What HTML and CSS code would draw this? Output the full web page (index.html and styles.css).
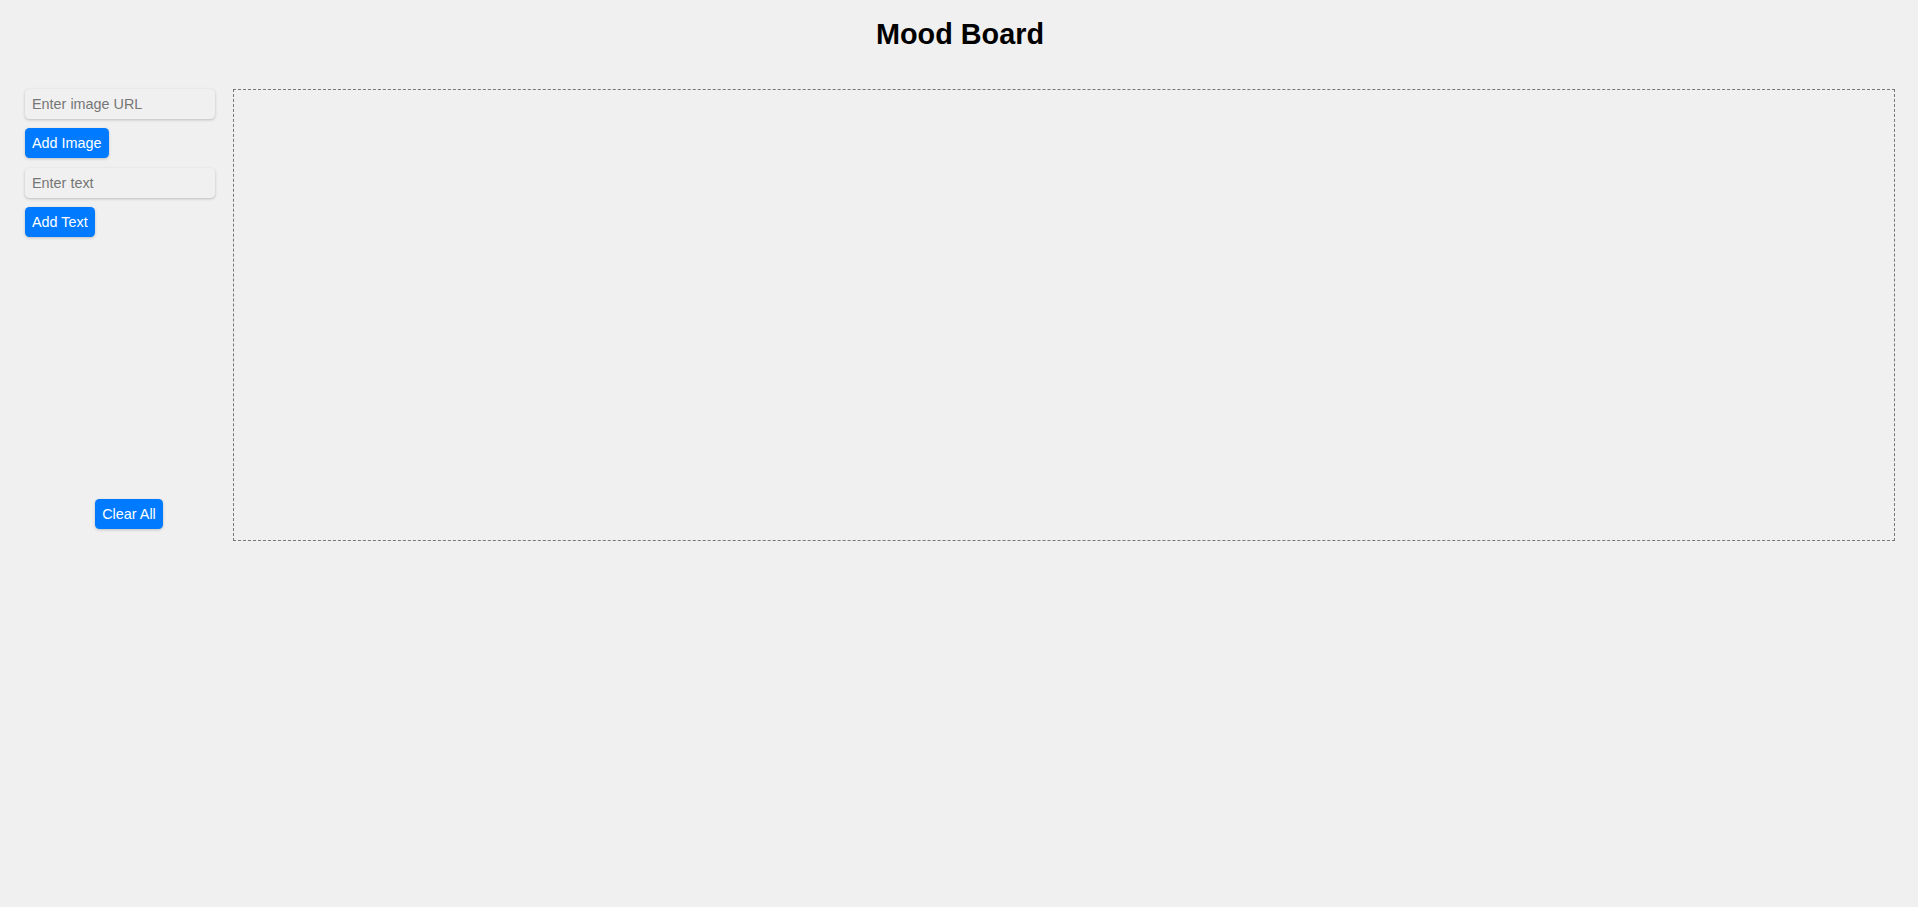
FILE: index.html
```html
<!DOCTYPE html>
<html lang="en">
<head>
<meta charset="utf-8">
<title>Mood Board</title>
<link rel="stylesheet" href="styles.css">
</head>
<body>
<h1 class="title">Mood Board</h1>
<div class="main">
  <aside class="sidebar">
    <input class="field" type="text" placeholder="Enter image URL">
    <button class="btn">Add Image</button>
    <input class="field" type="text" placeholder="Enter text">
    <button class="btn">Add Text</button>
    <button class="btn clear">Clear All</button>
  </aside>
  <div class="board"></div>
</div>
</body>
</html>
```

FILE: styles.css
```css
html, body {
  margin: 0;
  padding: 0;
  background: #f0f0f0;
  font-family: "Liberation Sans", Arial, sans-serif;
}
.title {
  margin: 18px 0 0;
  padding-left: 2px;
  height: 71px;
  font-size: 28.8px;
  font-weight: bold;
  line-height: 33px;
  text-align: center;
  color: #000;
}
.main {
  display: flex;
  padding: 0 23px 0 25px;
}
.sidebar {
  width: 208px;
  flex: none;
  display: flex;
  flex-direction: column;
  align-items: flex-start;
  gap: 9.4px;
}
.field {
  box-sizing: border-box;
  width: 190px;
  height: 30px;
  margin: 0;
  padding: 0 7px;
  border: none;
  border-radius: 4.5px;
  background: #f0f0f0;
  box-shadow: 0 1px 3px rgba(0, 0, 0, 0.22);
  font-family: "Liberation Sans", Arial, sans-serif;
  font-size: 14.4px;
  color: #333;
  outline: none;
}
.field::placeholder {
  color: #767676;
}
.btn {
  box-sizing: border-box;
  height: 30px;
  margin: 0;
  padding: 0 7px;
  border: none;
  border-radius: 4.5px;
  background: #007bff;
  color: #fff;
  font-family: "Liberation Sans", Arial, sans-serif;
  font-size: 14.4px;
  line-height: 30px;
  box-shadow: 0 1px 3px rgba(0, 0, 0, 0.2);
  cursor: pointer;
}
.clear {
  align-self: center;
  margin-top: auto;
  margin-bottom: 12px;
}
.board {
  flex: 1;
  height: 452px;
  box-sizing: border-box;
  border: 1px dashed #777;
}
```
